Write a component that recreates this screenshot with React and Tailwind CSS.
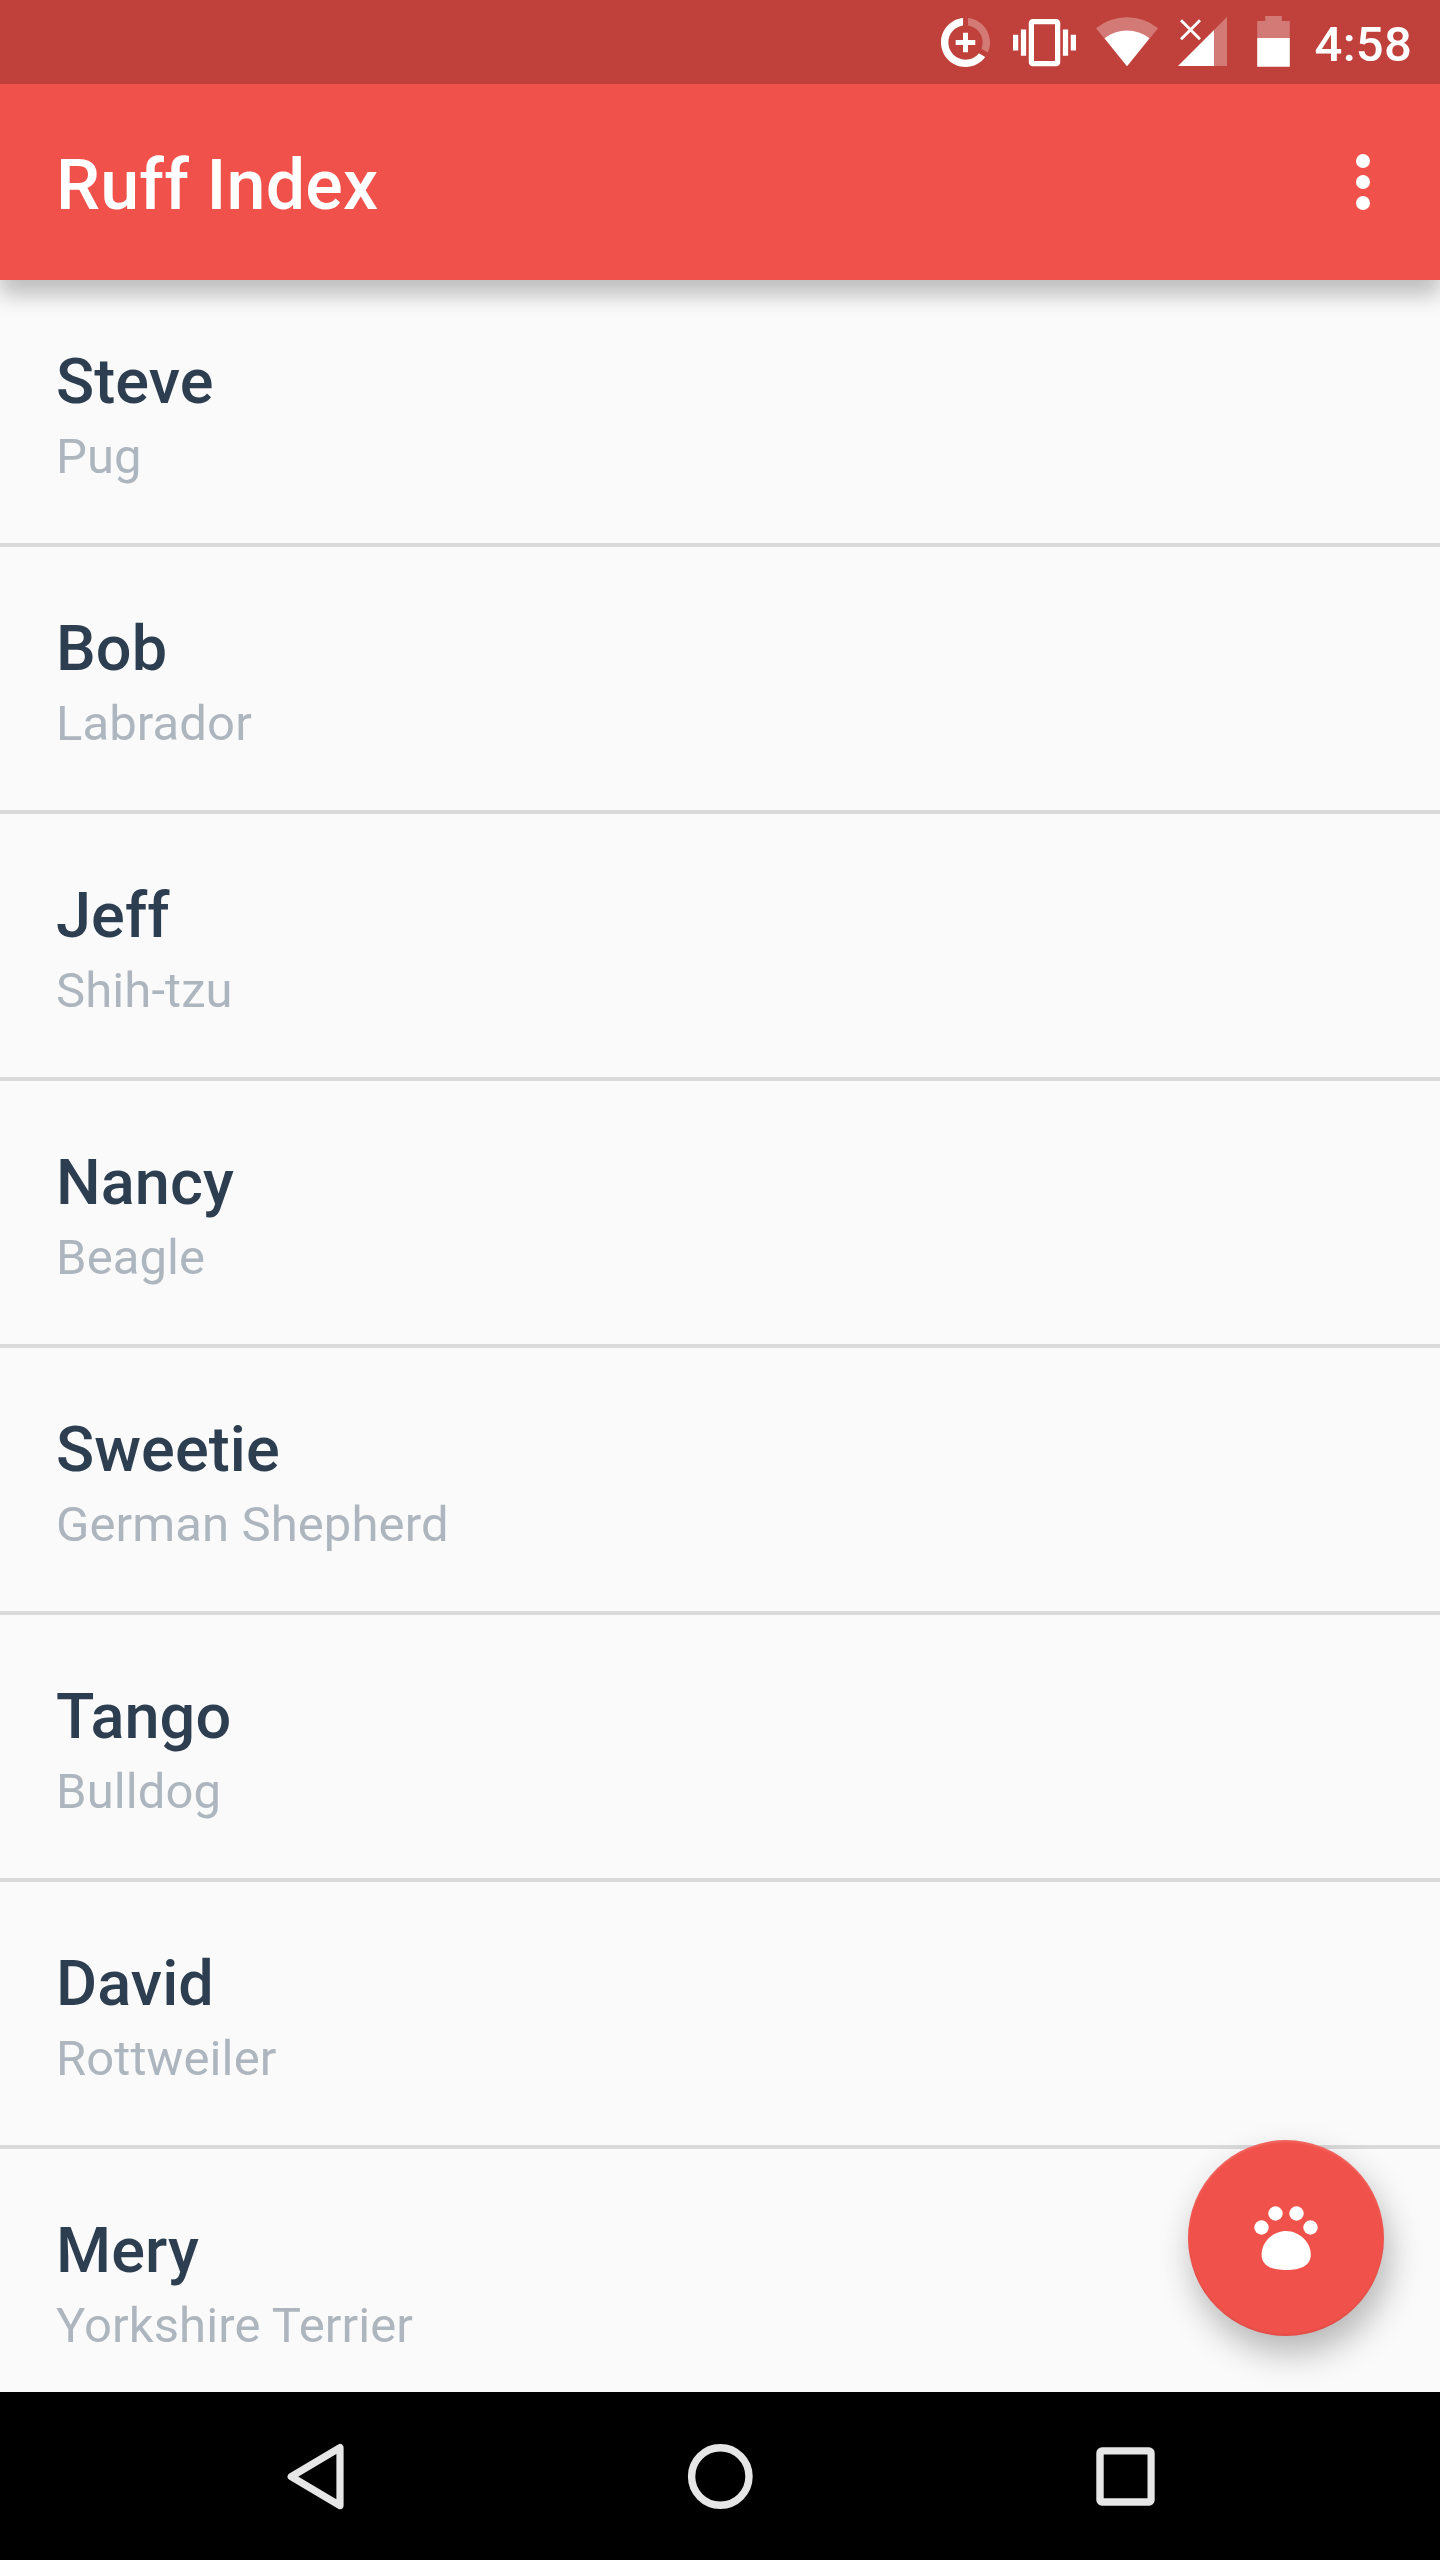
const dogs = [
  { name: "Steve", breed: "Pug" },
  { name: "Bob", breed: "Labrador" },
  { name: "Jeff", breed: "Shih-tzu" },
  { name: "Nancy", breed: "Beagle" },
  { name: "Sweetie", breed: "German Shepherd" },
  { name: "Tango", breed: "Bulldog" },
  { name: "David", breed: "Rottweiler" },
  { name: "Mery", breed: "Yorkshire Terrier" },
];

function DataUsageIcon() {
  return (
    <svg className="h-[84px] w-[50px]" viewBox="0 0 50 84" fill="#fff">
      <g transform="translate(-4.9 13.1) scale(2.45)">
        <path
          fillOpacity=".3"
          d="M13 2.05v3.03c3.39.49 6 3.39 6 6.92 0 .9-.18 1.75-.48 2.54l2.6 1.53c.56-1.24.88-2.62.88-4.07 0-5.18-3.95-9.45-9-9.95z"
        />
        <path d="M12 19c-3.87 0-7-3.13-7-7 0-3.53 2.61-6.43 6-6.92V2.05c-5.06.5-9 4.76-9 9.95 0 5.52 4.47 10 9.99 10 3.31 0 6.24-1.61 8.06-4.09l-2.6-1.53C16.17 17.98 14.21 19 12 19z" />
        <path d="M11 8h2v3h3v2h-3v3h-2v-3H8v-2h3z" />
      </g>
    </svg>
  );
}

function VibrateIcon() {
  return (
    <svg className="ml-[22px] h-[84px] w-[63px]" viewBox="0 0 63 84" fill="#fff">
      <path
        transform="translate(0 11.1) scale(2.625)"
        d="M0 15h2V9H0v6zm3 2h2V7H3v10zm19-8v6h2V9h-2zm-3 8h2V7h-2v10zM16.5 3h-9C6.67 3 6 3.67 6 4.5v15c0 .83.67 1.5 1.5 1.5h9c.83 0 1.5-.67 1.5-1.5v-15c0-.83-.67-1.5-1.5-1.5zM16 19H8V5h8v14z"
      />
    </svg>
  );
}

function WifiIcon() {
  return (
    <svg className="ml-5 h-[84px] w-[62px]" viewBox="0 0 62 84" fill="#fff">
      <path fillOpacity=".3" d="M31 66.2L0 28.2A49.3 49.3 0 0 1 62 28.2Z" />
      <path d="M31 66.2L8.5 38.3A36.5 36.5 0 0 1 53.5 38.3Z" />
    </svg>
  );
}

function SignalIcon() {
  return (
    <svg className="ml-5 h-[84px] w-[49px]" viewBox="0 0 49 84" fill="#fff">
      <path fillOpacity=".3" d="M36 30L49 17V66H36Z" />
      <path d="M0 66L36 30V66Z" />
      <path d="M3 20.3L22 39.2M22 20.3L3 39.2" stroke="#fff" strokeWidth="2.9" />
    </svg>
  );
}

function BatteryIcon() {
  return (
    <svg className="ml-[30px] h-[84px] w-[33px]" viewBox="0 0 33 84" fill="#fff">
      <path fillOpacity=".3" d="M8.2 16H24.8V21H32.8V38H.2V21H8.2Z" />
      <path d="M.2 38H32.8V66.7H.2Z" />
    </svg>
  );
}

function StatusBar() {
  return (
    <div className="relative z-20 flex h-[84px] shrink-0 items-center justify-end bg-[#c0413b] pr-7">
      <DataUsageIcon />
      <VibrateIcon />
      <WifiIcon />
      <SignalIcon />
      <BatteryIcon />
      <span className="ml-[25px] mt-1.5 text-[49px] leading-[58px] font-medium tracking-[0.25px] text-white">
        4:58
      </span>
    </div>
  );
}

function AppBar() {
  return (
    <header className="relative z-10 flex h-[196px] shrink-0 items-center justify-between bg-[#f0524b] pr-[70px] pl-14 shadow-[0_15px_20px_rgba(0,0,0,0.24)]">
      <h1 className="mt-1.5 text-[70px] leading-[82px] font-medium tracking-[0.15px] text-white">
        Ruff Index
      </h1>
      <button className="flex flex-col gap-[7px]" aria-label="More options">
        <span className="size-3.5 rounded-full bg-white" />
        <span className="size-3.5 rounded-full bg-white" />
        <span className="size-3.5 rounded-full bg-white" />
      </button>
    </header>
  );
}

function DogRow({ name, breed }) {
  return (
    <li className="h-[267px] shrink-0 border-b-4 border-[#dadada] px-14 pt-[65px]">
      <div className="text-[63px] leading-[74px] font-medium tracking-[0.1px] text-[#2c3e50]">{name}</div>
      <div className="mt-[9px] text-[49px] leading-[58px] tracking-[0.1px] text-[#adb6be]">{breed}</div>
    </li>
  );
}

function PawButton() {
  return (
    <button
      className="absolute right-14 bottom-14 flex size-[196px] items-center justify-center rounded-full bg-[#f0524b] shadow-[5px_17px_34px_rgba(0,0,0,0.28),inset_0_2px_2px_rgba(255,255,255,0.12),inset_0_-2px_2px_rgba(0,0,0,0.06)]"
      aria-label="Add dog"
    >
      <svg className="size-[84px]" viewBox="0 0 84 84" fill="#fff">
        <circle cx="17.5" cy="31.5" r="7.2" />
        <circle cx="31.5" cy="17.5" r="7.2" />
        <circle cx="52.5" cy="17.5" r="7.2" />
        <circle cx="66.5" cy="31.5" r="7.2" />
        <path d="M42 35C55 35 66.8 46 66.8 58.5C66.8 69.5 57 74 42 74C27 74 17.6 69.5 17.6 58.5C17.6 46 29 35 42 35Z" />
      </svg>
    </button>
  );
}

function NavBar() {
  return (
    <nav className="flex h-[168px] shrink-0 justify-center bg-black">
      <button className="flex w-[405px] justify-center" aria-label="Back">
        <svg className="h-[168px] w-[84px]" viewBox="0 0 84 168" fill="none">
          <path
            d="M67 55.6V113.6L18.2 84.6Z"
            stroke="#e6e6e6"
            strokeWidth="7.2"
            strokeLinejoin="round"
          />
        </svg>
      </button>
      <button className="flex w-[405px] justify-center" aria-label="Home">
        <svg className="h-[168px] w-[84px]" viewBox="0 0 84 168" fill="none">
          <circle cx="42.3" cy="84.5" r="28.7" stroke="#e6e6e6" strokeWidth="7.4" />
        </svg>
      </button>
      <button className="flex w-[405px] justify-center" aria-label="Overview">
        <svg className="h-[168px] w-[84px]" viewBox="0 0 84 168" fill="#e6e6e6">
          <path
            fillRule="evenodd"
            d="M19 55.3H66A5.7 5.7 0 0 1 71.7 61V108A5.7 5.7 0 0 1 66 113.7H19A5.7 5.7 0 0 1 13.3 108V61A5.7 5.7 0 0 1 19 55.3ZM20.7 62.5V106.3H64.5V62.5Z"
          />
        </svg>
      </button>
    </nav>
  );
}

export default function App() {
  return (
    <div className="flex h-[2560px] w-[1440px] flex-col overflow-hidden bg-[#fafafa] font-['Roboto',sans-serif]">
      <StatusBar />
      <AppBar />
      <main className="relative h-[2112px] shrink-0 overflow-hidden">
        <ul className="flex flex-col">
          {dogs.map((dog) => (
            <DogRow key={dog.name} name={dog.name} breed={dog.breed} />
          ))}
        </ul>
        <PawButton />
      </main>
      <NavBar />
    </div>
  );
}
